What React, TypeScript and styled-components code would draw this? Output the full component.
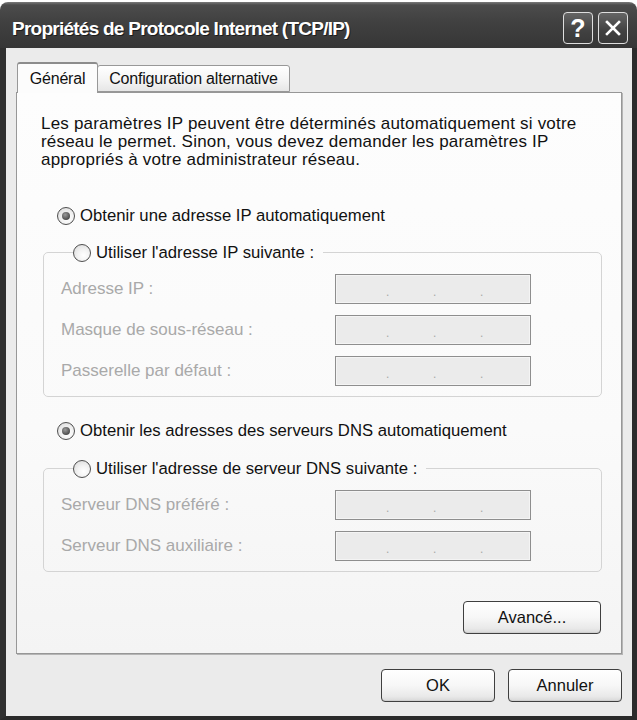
import React from 'react';
import styled, { createGlobalStyle } from 'styled-components';

const GlobalStyle = createGlobalStyle`
  html, body {
    margin: 0;
    padding: 0;
    background: #ffffff;
  }
  body {
    font-family: "Liberation Sans", Arial, sans-serif;
    font-size: 17px;
    color: #111;
  }
`;

const Window = styled.div`
  width: 637px;
  height: 720px;
  display: flex;
  flex-direction: column;
`;

const TitleBar = styled.div`
  height: 46px;
  margin-top: 2px;
  border-radius: 8px 8px 0 0;
  background: linear-gradient(#7a7a7a 0, #4c4c4c 3px, #404040 45%, #363636 100%);
  display: flex;
  align-items: center;
  padding: 6px 9px 0 12px;
  box-sizing: border-box;
`;

const Title = styled.div`
  flex: 1;
  color: #fff;
  font-family: "Liberation Sans", Arial, sans-serif;
  font-weight: bold;
  font-size: 19px;
  letter-spacing: -0.75px;
  text-shadow: 1px 1px 0 #1c1c1c;
  margin-top: 2px;
`;

const CaptionButtons = styled.div`
  display: flex;
  gap: 5px;
`;

const CaptionButton = styled.div`
  width: 30px;
  height: 32px;
  box-sizing: border-box;
  border: 1.5px solid #dedede;
  border-radius: 4px;
  background: linear-gradient(#656565, #414141 60%, #393939);
  color: #fff;
  display: flex;
  align-items: center;
  justify-content: center;
  font-family: "Liberation Sans", sans-serif;
  font-weight: bold;
  font-size: 25px;
  line-height: 1;
`;

const Client = styled.div`
  flex: 1;
  display: flex;
  flex-direction: column;
  background: #ebebeb;
  border-left: 6px solid #303030;
  border-right: 5px solid #2c2c2c;
  border-bottom: 4px solid #2a2a2a;
  padding: 14px 10px 0 10px;
  min-height: 0;
`;

const TabStrip = styled.div`
  display: flex;
  align-items: flex-end;
  padding-left: 1px;
  margin-bottom: -1px;
  position: relative;
  z-index: 1;
`;

const Tab = styled.div<{ $active?: boolean; $width: number }>`
  box-sizing: border-box;
  width: ${({ $width }) => $width}px;
  height: ${({ $active }) => ($active ? '31px' : '27px')};
  margin-bottom: ${({ $active }) => ($active ? '0' : '1px')};
  border: 1px solid #989898;
  border-bottom: ${({ $active }) => ($active ? 'none' : '1px solid #989898')};
  border-top: ${({ $active }) => ($active ? '2px solid #8c8c8c' : '1px solid #989898')};
  border-radius: 3px 3px 0 0;
  background: ${({ $active }) =>
    $active ? '#fcfcfc' : 'linear-gradient(#ffffff, #f3f3f3 60%, #e6e6e6)'};
  display: flex;
  align-items: center;
  justify-content: center;
  font-size: 16px;
  letter-spacing: -0.2px;
  color: #111;
  white-space: nowrap;
  ${({ $active }) => (!$active ? 'margin-left: -1px;' : '')}
`;

const Panel = styled.div`
  flex: 1;
  display: flex;
  flex-direction: column;
  border: 1px solid #979797;
  box-shadow: 1px 1px 0 #b5b5b5;
  background: linear-gradient(#fdfdfd, #fafafa 60%, #f4f4f4);
  padding: 22px 19px 19px 24px;
  min-height: 0;
`;

const Description = styled.p`
  margin: 0;
  line-height: 18px;
  letter-spacing: 0.2px;
  color: #111;
`;

const RadioRow = styled.div<{ $top: number }>`
  display: flex;
  align-items: center;
  margin-top: ${({ $top }) => $top}px;
  margin-left: 16px;
  line-height: 19px;
  font-size: 16.7px;
`;

const Radio = styled.span<{ $checked?: boolean }>`
  width: 18px;
  height: 18px;
  box-sizing: border-box;
  border-radius: 50%;
  border: 1px solid #4e4e4e;
  background: radial-gradient(circle at 60% 65%, #ffffff 0, #f3f3f3 40%, #d6d6d6 100%);
  display: inline-flex;
  align-items: center;
  justify-content: center;
  margin-right: 5px;
  flex: none;
  &::after {
    content: '';
    display: ${({ $checked }) => ($checked ? 'block' : 'none')};
    width: 8px;
    height: 8px;
    border-radius: 50%;
    background: radial-gradient(circle at 40% 35%, #9a9a9a, #4d4d4d 70%);
  }
`;

const Group = styled.fieldset<{ $top: number }>`
  margin: ${({ $top }) => $top}px 0 0 2px;
  padding: 12px 0 10px 17px;
  border: 1px solid #d4d4d4;
  border-radius: 5px;
  display: grid;
  grid-template-columns: 274px 196px;
  row-gap: 11px;
  align-items: center;
  min-width: 0;
`;

const Legend = styled.legend`
  margin-left: 12px;
  padding: 0 9px 0 0;
  display: flex;
  align-items: center;
  line-height: 19px;
  font-size: 16.7px;
  color: #111;
`;

const FieldLabel = styled.span`
  color: #a9a9a9;
`;

const IpField = styled.div`
  height: 30px;
  box-sizing: border-box;
  border: 1px solid #8e8e8e;
  box-shadow: inset 0 0 0 1px #f4f4f4;
  background: #ebebeb;
  display: flex;
  align-items: flex-end;
  padding: 0 0 5px 50px;
  color: #a8a8a8;
  font-size: 12px;
  line-height: 12px;
`;

const Dot = styled.span`
  width: 47px;
  &:last-child {
    width: auto;
  }
`;

const Button = styled.button<{ $width: number }>`
  width: ${({ $width }) => $width}px;
  height: 33px;
  box-sizing: border-box;
  border: 1px solid #3f3f3f;
  border-radius: 4px;
  background: linear-gradient(#ffffff, #f7f7f7 50%, #e9e9e9 85%, #d8d8d8);
  box-shadow: inset 0 -1px 0 #cfcfcf;
  font-family: "Liberation Sans", Arial, sans-serif;
  font-size: 16.5px;
  color: #111;
  padding: 0;
`;

const PanelFooter = styled.div`
  margin-top: auto;
  display: flex;
  justify-content: flex-end;
  padding-right: 1px;
`;

const Footer = styled.div`
  display: flex;
  justify-content: flex-end;
  gap: 13px;
  padding: 15px 0 14px 0;
`;

function CloseGlyph() {
  return (
    <svg width="18" height="18" viewBox="0 0 18 18">
      <path d="M3 3 L15 15 M15 3 L3 15" stroke="#fff" strokeWidth="2.6" strokeLinecap="square" />
    </svg>
  );
}

function Dots() {
  return (
    <>
      <Dot>.</Dot>
      <Dot>.</Dot>
      <Dot>.</Dot>
    </>
  );
}

function AddressRow({ label }: { label: string }) {
  return (
    <>
      <FieldLabel>{label}</FieldLabel>
      <IpField>
        <Dots />
      </IpField>
    </>
  );
}

export default function App() {
  return (
    <>
      <GlobalStyle />
      <Window>
        <TitleBar>
          <Title>Propriétés de Protocole Internet (TCP/IP)</Title>
          <CaptionButtons>
            <CaptionButton>?</CaptionButton>
            <CaptionButton>
              <CloseGlyph />
            </CaptionButton>
          </CaptionButtons>
        </TitleBar>
        <Client>
          <TabStrip>
            <Tab $active $width={81}>Général</Tab>
            <Tab $width={193}>Configuration alternative</Tab>
          </TabStrip>
          <Panel>
            <Description>
              Les paramètres IP peuvent être déterminés automatiquement si votre
              <br />
              réseau le permet. Sinon, vous devez demander les paramètres IP
              <br />
              appropriés à votre administrateur réseau.
            </Description>
            <RadioRow $top={37}>
              <Radio $checked />
              Obtenir une adresse IP automatiquement
            </RadioRow>
            <Group $top={18}>
              <Legend>
                <Radio />
                Utiliser l'adresse IP suivante :
              </Legend>
              <AddressRow label="Adresse IP :" />
              <AddressRow label="Masque de sous-réseau :" />
              <AddressRow label="Passerelle par défaut :" />
            </Group>
            <RadioRow $top={24}>
              <Radio $checked />
              Obtenir les adresses des serveurs DNS automatiquement
            </RadioRow>
            <Group $top={19}>
              <Legend>
                <Radio />
                Utiliser l'adresse de serveur DNS suivante :
              </Legend>
              <AddressRow label="Serveur DNS préféré :" />
              <AddressRow label="Serveur DNS auxiliaire :" />
            </Group>
            <PanelFooter>
              <Button $width={138}>Avancé...</Button>
            </PanelFooter>
          </Panel>
          <Footer>
            <Button $width={114}>OK</Button>
            <Button $width={114}>Annuler</Button>
          </Footer>
        </Client>
      </Window>
    </>
  );
}
